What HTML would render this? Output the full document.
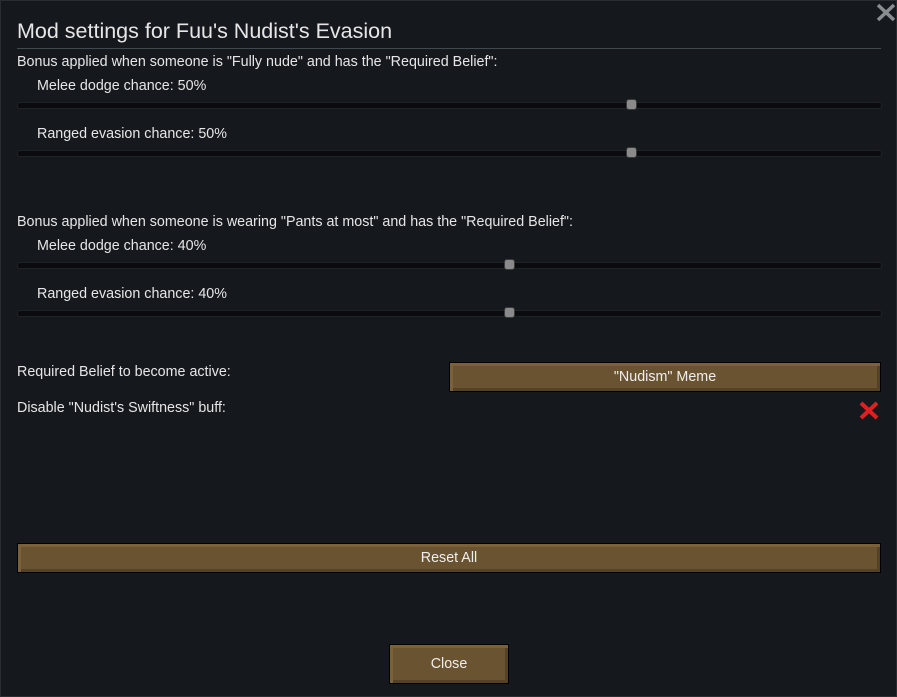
<!DOCTYPE html><html><head><style>
body{margin:0;width:897px;height:697px;background:#15181d;position:relative;overflow:hidden;font-family:"Liberation Sans",sans-serif;color:#e6e6e6;font-size:14.3px}
.b{position:absolute;left:0;top:0;width:895px;height:695px;border:1px solid #2a2e33}
.t{position:absolute;white-space:nowrap}
.tr{position:absolute;left:17px;width:863px;height:5px;background:#0a0b0d;border-radius:3px;border:1px solid #1f2226}
.th{position:absolute;width:11px;height:11px;background:#8a8a8a;border:1px solid #3a3a3a;border-radius:3px;box-sizing:border-box}
.btn{position:absolute;background:#6a5330;border:1px solid #000;box-sizing:border-box;box-shadow:inset 3px 3px 0 #7b6038,inset -3px -3px 0 #554124;text-align:center;color:#eee}
</style></head><body><div class="b"></div>
<div class="t" style="left:17px;top:19px;font-size:21.5px">Mod settings for Fuu's Nudist's Evasion</div>
<div style="position:absolute;left:17px;top:48px;width:864px;height:1px;background:#3e4a4f"></div>
<svg style="position:absolute;left:876px;top:3px" width="20" height="19"><path d="M2 2L18 17M18 2L2 17" stroke="#8a8d90" stroke-width="3.5"/></svg>
<div class="t" style="left:17px;top:54px">Bonus applied when someone is "Fully nude" and has the "Required Belief":</div>
<div class="t" style="left:37px;top:78px">Melee dodge chance: 50%</div>
<div class="tr" style="top:102px"></div><div class="th" style="left:626px;top:99px"></div>
<div class="t" style="left:37px;top:126px">Ranged evasion chance: 50%</div>
<div class="tr" style="top:150px"></div><div class="th" style="left:626px;top:147px"></div>
<div class="t" style="left:17px;top:214px">Bonus applied when someone is wearing "Pants at most" and has the "Required Belief":</div>
<div class="t" style="left:37px;top:238px">Melee dodge chance: 40%</div>
<div class="tr" style="top:262px"></div><div class="th" style="left:504px;top:259px"></div>
<div class="t" style="left:37px;top:286px">Ranged evasion chance: 40%</div>
<div class="tr" style="top:310px"></div><div class="th" style="left:504px;top:307px"></div>
<div class="t" style="left:17px;top:364px">Required Belief to become active:</div>
<div class="btn" style="left:449px;top:362px;width:432px;height:30px;line-height:29px">"Nudism" Meme</div>
<div class="t" style="left:17px;top:400px">Disable "Nudist's Swiftness" buff:</div>
<svg style="position:absolute;left:858px;top:400px" width="22" height="21"><path d="M3 3L19 18M19 3L3 18" stroke="#e02020" stroke-width="4"/></svg>
<div class="btn" style="left:17px;top:543px;width:864px;height:30px;line-height:29px">Reset All</div>
<div class="btn" style="left:389px;top:644px;width:120px;height:40px;line-height:39px">Close</div>
</body></html>
